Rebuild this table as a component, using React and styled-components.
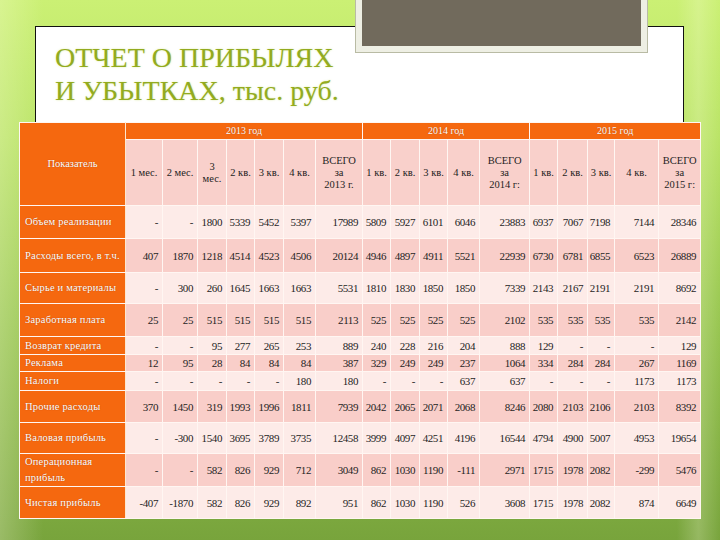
import React from "react";
import styled, { createGlobalStyle } from "styled-components";

const orange = "#f5680f";
const pinkHead = "#f9d0cb";
const pinkRow = "#f9cec9";
const lightRow = "#fdebe8";
const olive = "#93ab1f";

const widths = [106, 37, 35, 29, 28, 29, 32, 47, 28, 29, 28, 32, 50, 28, 30, 27, 44, 42];

const years = [
  { label: "2013 год", span: 7 },
  { label: "2014 год", span: 5 },
  { label: "2015 год", span: 5 },
];

const heads = [
  ["1 мес."],
  ["2 мес."],
  ["3", "мес."],
  ["2 кв."],
  ["3 кв."],
  ["4 кв."],
  ["ВСЕГО", "за", "2013 г."],
  ["1 кв."],
  ["2 кв."],
  ["3 кв."],
  ["4 кв."],
  ["ВСЕГО", "за", "2014 г:"],
  ["1 кв."],
  ["2 кв."],
  ["3 кв."],
  ["4 кв."],
  ["ВСЕГО", "за", "2015 г:"],
];

const rows = [
  { name: "Объем реализации", h: 33, v: ["-", "-", 1800, 5339, 5452, 5397, 17989, 5809, 5927, 6101, 6046, 23883, 6937, 7067, 7198, 7144, 28346] },
  { name: "Расходы всего, в т.ч.", h: 34, v: [407, 1870, 1218, 4514, 4523, 4506, 20124, 4946, 4897, 4911, 5521, 22939, 6730, 6781, 6855, 6523, 26889] },
  { name: "Сырье и материалы", h: 31, v: ["-", 300, 260, 1645, 1663, 1663, 5531, 1810, 1830, 1850, 1850, 7339, 2143, 2167, 2191, 2191, 8692] },
  { name: "Заработная плата", h: 33, v: [25, 25, 515, 515, 515, 515, 2113, 525, 525, 525, 525, 2102, 535, 535, 535, 535, 2142] },
  { name: "Возврат кредита", h: 18, v: ["-", "-", 95, 277, 265, 253, 889, 240, 228, 216, 204, 888, 129, "-", "-", "-", 129] },
  { name: "Реклама", h: 17, v: [12, 95, 28, 84, 84, 84, 387, 329, 249, 249, 237, 1064, 334, 284, 284, 267, 1169] },
  { name: "Налоги", h: 19, v: ["-", "-", "-", "-", "-", 180, 180, "-", "-", "-", 637, 637, "-", "-", "-", 1173, 1173] },
  { name: "Прочие расходы", h: 32, v: [370, 1450, 319, 1993, 1996, 1811, 7939, 2042, 2065, 2071, 2068, 8246, 2080, 2103, 2106, 2103, 8392] },
  { name: "Валовая прибыль", h: 31, v: ["-", -300, 1540, 3695, 3789, 3735, 12458, 3999, 4097, 4251, 4196, 16544, 4794, 4900, 5007, 4953, 19654] },
  { name: "Операционная прибыль", h: 33, v: ["-", "-", 582, 826, 929, 712, 3049, 862, 1030, 1190, -111, 2971, 1715, 1978, 2082, -299, 5476] },
  { name: "Чистая прибыль", h: 32, v: [-407, -1870, 582, 826, 929, 892, 951, 862, 1030, 1190, 526, 3608, 1715, 1978, 2082, 874, 6649] },
];

const GlobalStyle = createGlobalStyle`
  body {
    margin: 0;
    font-family: "Liberation Serif", "Times New Roman", serif;
  }
`;

const Slide = styled.div`
  position: relative;
  width: 720px;
  height: 540px;
  overflow: hidden;
  box-sizing: border-box;
  padding-top: 26px;
  background:
    linear-gradient(90deg, rgba(255, 255, 230, 0.25) 0%, rgba(255, 255, 230, 0) 6%, rgba(255, 255, 230, 0) 94%, rgba(255, 255, 230, 0.22) 97%, rgba(255, 255, 230, 0) 100%),
    linear-gradient(180deg, #cbf074 0%, #bae466 25%, #98c651 60%, #78a43c 100%);
`;

const Deco = styled.div`
  position: absolute;
  left: 355px;
  top: -8px;
  width: 291px;
  height: 59px;
  background: #716a5c;
  border: 1px solid #b9bba4;
  box-shadow: inset 0 0 0 6px #eeefe4;
`;

const Card = styled.div`
  width: 647px;
  margin-left: 35px;
  padding-top: 14px;
  background: #fff;
  border: 1px solid #111;
  border-bottom: none;
`;

const Title = styled.h1`
  margin: 0 0 0 19px;
  font-family: "Liberation Serif", "Times New Roman", serif;
  font-size: 28px;
  line-height: 33px;
  font-weight: normal;
  color: ${olive};
  text-shadow: 0 0 2px rgba(190, 215, 90, 0.6);
`;

const Sheet = styled.table`
  width: 681px;
  margin: 15px 0 0 -17px;
  table-layout: fixed;
  border-collapse: collapse;
  border: 1px solid #fbe3c6;
  font-family: "Liberation Serif", "Times New Roman", serif;
  color: #1e1e1e;
`;

const Col = styled.col`
  width: ${(p) => p.$w}px;
`;

const Row = styled.tr`
  height: ${(p) => p.$h}px;
  background: ${(p) => (p.$alt ? pinkRow : lightRow)};
`;

const Cell = styled.td`
  padding: 0;
  border: 1px solid #fff6f2;
  font-size: 11px;
  line-height: 12px;
  vertical-align: middle;
`;

const CornerCell = styled(Cell)`
  background: ${orange};
  color: #fff;
  text-align: center;
  font-size: 10.5px;
  text-shadow: 0 0 1px #a83c00;
  border-right-color: #fde7cf;
`;

const YearCell = styled(Cell)`
  background: ${orange};
  color: #fff;
  text-align: center;
  font-size: 10px;
  text-shadow: 0 0 1px #a83c00;
`;

const HeadCell = styled(Cell)`
  background: ${pinkHead};
  text-align: center;
  font-size: 10.5px;
`;

const LabelCell = styled(Cell)`
  background: ${orange};
  color: #fff;
  padding-left: 5px;
  font-size: 10.5px;
  line-height: 16px;
  letter-spacing: 0.2px;
  text-shadow: 0 0 1px #a83c00;
  border-right-color: #fde7cf;
`;

const NumCell = styled(Cell)`
  text-align: right;
  padding-right: 4px;
  letter-spacing: -0.4px;
  white-space: nowrap;
`;

const Line = styled.span`
  display: block;
`;

export default function App() {
  return (
    <>
      <GlobalStyle />
      <Slide>
        <Deco />
        <Card>
          <Title>
            ОТЧЕТ О ПРИБЫЛЯХ
            <br />И УБЫТКАХ, тыс. руб.
          </Title>
          <Sheet>
            <colgroup>
              {widths.map((w, i) => (
                <Col key={i} $w={w} />
              ))}
            </colgroup>
            <tbody>
              <Row $h={17}>
                <CornerCell rowSpan={2}>Показатель</CornerCell>
                {years.map((y) => (
                  <YearCell key={y.label} colSpan={y.span}>
                    {y.label}
                  </YearCell>
                ))}
              </Row>
              <Row $h={66}>
                {heads.map((lines, i) => (
                  <HeadCell key={i}>
                    {lines.map((l) => (
                      <Line key={l}>{l}</Line>
                    ))}
                  </HeadCell>
                ))}
              </Row>
              {rows.map((r, ri) => (
                <Row key={r.name} $h={r.h} $alt={ri % 2 === 1}>
                  <LabelCell>{r.name}</LabelCell>
                  {r.v.map((v, i) => (
                    <NumCell key={i}>{v}</NumCell>
                  ))}
                </Row>
              ))}
            </tbody>
          </Sheet>
        </Card>
      </Slide>
    </>
  );
}
